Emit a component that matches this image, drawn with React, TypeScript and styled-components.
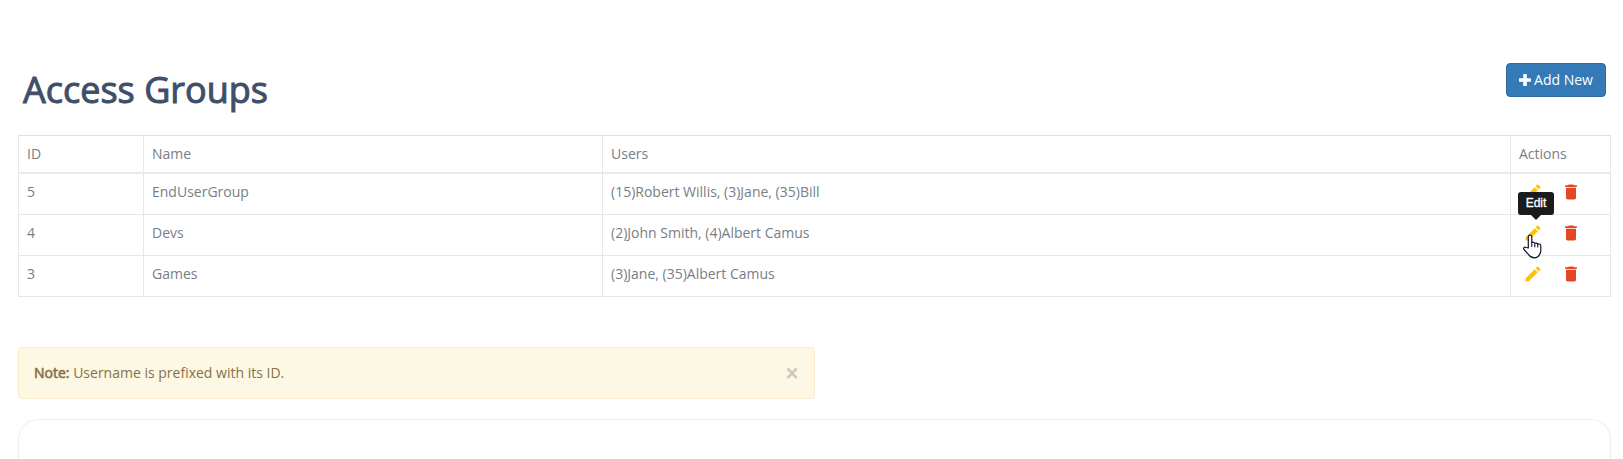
import React from "react";
import styled, { createGlobalStyle } from "styled-components";
import { MdDelete, MdEdit } from "react-icons/md";

const GlobalStyle = createGlobalStyle`
  * { box-sizing: border-box; }
  body {
    margin: 0;
    background: #fff;
    color: #777e86;
    font: 14px/20px "Open Sans", sans-serif;
  }
`;

const Page = styled.main`
  display: flex;
  flex-direction: column;
  height: 459px;
  padding: 63px 12px 0 18px;
`;

const Header = styled.header`
  display: flex;
  justify-content: space-between;
  align-items: flex-start;
  height: 72px;
  padding: 0 5px;
`;

const Title = styled.h1`
  margin: 7px 0 0;
  color: #3f4f69;
  font-size: 36px;
  font-weight: 400;
  line-height: 40px;
  -webkit-text-stroke: 1px #3f4f69;
`;

const AddButton = styled.button`
  display: flex;
  align-items: center;
  justify-content: center;
  gap: 3px;
  width: 100px;
  height: 34px;
  padding: 0;
  border: 1px solid #2e6da4;
  border-radius: 4px;
  background: #337ab7;
  color: #fff;
  font: inherit;
`;

const Table = styled.table`
  width: 1593px;
  border-collapse: separate;
  border-spacing: 0;
  table-layout: fixed;
  border-left: 1px solid #e7e8ea;
  border-top: 1px solid #dddfe0;
`;

const HeadCell = styled.th<{ $width: number }>`
  width: ${(p) => p.$width}px;
  height: 38px;
  padding: 0 8px 1px;
  border-right: 1px solid #e7e8ea;
  border-bottom: 2px solid #e7eaed;
  font-weight: 400;
  text-align: left;
`;

const Cell = styled.td`
  height: 41px;
  padding: 8px 8px 12px;
  line-height: 20px;
  border-right: 1px solid #e7e7e7;
  border-bottom: 1px solid #e7e7e7;
`;

const Actions = styled.div`
  display: flex;
  gap: 18px;
  height: 20px;
  padding-left: 4px;
`;

const IconButton = styled.span<{ $color: string }>`
  position: relative;
  display: block;
  width: 20px;
  height: 20px;
  color: ${(p) => p.$color};
  cursor: pointer;
  svg { display: block; }
`;

const Tooltip = styled.span`
  position: absolute;
  z-index: 1;
  left: -5px;
  top: -31px;
  width: 36px;
  height: 23px;
  border-radius: 3px;
  background: #1b1b1b;
  color: #fff;
  font: 12px/22px "Liberation Sans", sans-serif;
  text-align: center;
  -webkit-text-stroke: 0.3px #fff;
  &::after {
    content: "";
    position: absolute;
    top: 23px;
    left: 13px;
    border: 5px solid transparent;
    border-top-color: #1b1b1b;
    border-bottom: 0;
  }
`;

const Pointer = styled.svg`
  position: absolute;
  z-index: 2;
  left: 0;
  top: 11px;
  overflow: visible;
`;

const Note = styled.aside`
  display: flex;
  flex: none;
  justify-content: space-between;
  align-items: center;
  width: 797px;
  height: 52px;
  margin-top: 50px;
  padding: 0 15px;
  border: 1px solid #faebcc;
  border-radius: 4px;
  background: #fcf8e3;
  color: #86704d;
`;

const Strong = styled.strong`
  font-weight: 400;
  -webkit-text-stroke: 0.6px #86704d;
`;

const Close = styled.button`
  padding: 0 1px 0 0;
  border: 0;
  background: none;
  color: #c9c6b6;
  font: 400 21px/21px "Open Sans", sans-serif;
  -webkit-text-stroke: 0.8px #c9c6b6;
`;

const Panel = styled.section`
  flex: 1;
  width: 1593px;
  margin-top: 20px;
  border: 1px solid #eeeeee;
  border-bottom: 0;
  border-radius: 20px 20px 0 0;
`;

const columns = [
  { label: "ID", width: 125 },
  { label: "Name", width: 459 },
  { label: "Users", width: 908 },
  { label: "Actions", width: 100 },
];

const groups = [
  { id: 5, name: "EndUserGroup", users: "(15)Robert Willis, (3)Jane, (35)Bill" },
  { id: 4, name: "Devs", users: "(2)John Smith, (4)Albert Camus" },
  { id: 3, name: "Games", users: "(3)Jane, (35)Albert Camus" },
];

function PlusIcon() {
  return (
    <svg width="12" height="12" viewBox="0 0 12 12" fill="#fff">
      <path d="M4.8 0h2.4q.6 0 .6.6v3.6h3.6q.6 0 .6.6v2.4q0 .6-.6.6H7.8v3.6q0 .6-.6.6H4.8q-.6 0-.6-.6V7.8H.6q-.6 0-.6-.6V4.8q0-.6.6-.6h3.6V.6q0-.6.6-.6z" />
    </svg>
  );
}

function HandPointer() {
  return (
    <Pointer width="19" height="25" viewBox="0 0 19 25">
      <path
        d="M5.3 14V3C5.3.3 8.8.3 8.8 3v5.6c.8-.8 2.7-.5 3 .8 1-.8 2.6-.3 2.9.8 1.5-.7 3.1.2 3.1 2v4.3c0 2-.7 3.1-1.4 4.3-.9 2-2.5 3-5 3-3 0-4.5-1.1-5.8-3.1L.9 15.4c-1-1.8.7-3 2.3-1.9z"
        fill="#fff"
        stroke="#111427"
        strokeWidth="1.2"
        strokeLinejoin="round"
      />
      <path d="M8.8 8v5M11.8 9.3v4M14.7 10.2v3.3" stroke="#111427" strokeWidth="1.1" />
    </Pointer>
  );
}

export default function App() {
  return (
    <>
      <GlobalStyle />
      <Page>
        <Header>
          <Title>Access Groups</Title>
          <AddButton>
            <PlusIcon />
            Add New
          </AddButton>
        </Header>
        <Table>
          <thead>
            <tr>
              {columns.map((c) => (
                <HeadCell key={c.label} $width={c.width}>{c.label}</HeadCell>
              ))}
            </tr>
          </thead>
          <tbody>
            {groups.map((g) => (
              <tr key={g.id}>
                <Cell>{g.id}</Cell>
                <Cell>{g.name}</Cell>
                <Cell>{g.users}</Cell>
                <Cell>
                  <Actions>
                    <IconButton $color="#ffc107">
                      <MdEdit size={20} />
                      {g.id === 4 && (
                        <>
                          <Tooltip>Edit</Tooltip>
                          <HandPointer />
                        </>
                      )}
                    </IconButton>
                    <IconButton $color="#e34724">
                      <MdDelete size={20} />
                    </IconButton>
                  </Actions>
                </Cell>
              </tr>
            ))}
          </tbody>
        </Table>
        <Note>
          <span><Strong>Note:</Strong> Username is prefixed with its ID.</span>
          <Close>×</Close>
        </Note>
        <Panel />
      </Page>
    </>
  );
}
